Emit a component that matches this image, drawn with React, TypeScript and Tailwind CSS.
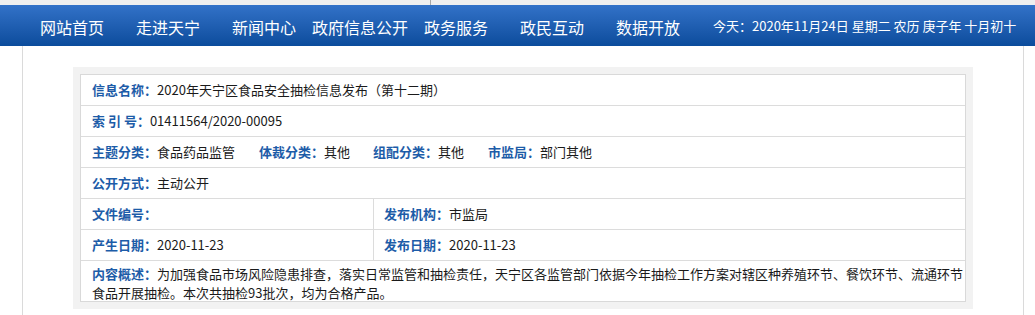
const navItems = ['网站首页', '走进天宁', '新闻中心', '政府信息公开', '政务服务', '政民互动', '数据开放'];

function Label({ children }: { children: React.ReactNode }) {
  return <span className="font-bold text-[#1d5ca8]">{children}</span>;
}

export default function App() {
  return (
    <div className="w-[1035px] h-[315px] bg-white overflow-hidden text-[13px] text-[#1a1a1a]" style={{ fontFamily: '"Noto Sans CJK SC", "Noto Sans", sans-serif' }}>
      {/* top strip */}
      <div className="h-[5px] bg-[#efefef] flex">
        <div className="w-[430px]" />
        <div className="w-px bg-[#a8a8a8]" />
      </div>

      {/* nav */}
      <div className="h-[41px] bg-gradient-to-b from-[#3272c8] to-[#0b4c9c] flex items-center pl-[24px] text-white">
        {navItems.map((item) => (
          <a key={item} className="w-[96px] text-center text-[16px] pt-[3px] whitespace-nowrap">{item}</a>
        ))}
        <div className="ml-[17px] text-[13px] pt-[1px] whitespace-nowrap">今天：2020年11月24日 星期二 农历 庚子年 十月初十</div>
      </div>

      {/* body */}
      <div className="ml-[22px] w-[1002px] h-[269px] border-x border-[#dadada] pt-[21px]">
        <div className="ml-[50px] w-[900px] bg-[#f2f2f2] p-[7px]">
          <div className="border border-[#d9d9d9] bg-white">
            <div className="h-[31px] border-b border-[#dcdcdc] flex items-center pl-[11px]">
              <Label>信息名称：</Label>
              <span>2020年天宁区食品安全抽检信息发布（第十二期）</span>
            </div>
            <div className="h-[31px] border-b border-[#dcdcdc] flex items-center pl-[11px]">
              <Label>索 引 号：</Label>
              <span>01411564/2020-00095</span>
            </div>
            <div className="h-[31px] border-b border-[#dcdcdc] flex items-center pl-[11px]">
              <span className="w-[167px] whitespace-nowrap"><Label>主题分类：</Label>食品药品监管</span>
              <span className="w-[114px] whitespace-nowrap"><Label>体裁分类：</Label>其他</span>
              <span className="w-[115px] whitespace-nowrap"><Label>组配分类：</Label>其他</span>
              <span className="whitespace-nowrap"><Label>市监局：</Label>部门其他</span>
            </div>
            <div className="h-[31px] border-b border-[#dcdcdc] flex items-center pl-[11px]">
              <Label>公开方式：</Label>
              <span>主动公开</span>
            </div>
            <div className="h-[31px] border-b border-[#dcdcdc] flex">
              <div className="w-[293px] border-r border-[#dcdcdc] flex items-center pl-[11px]">
                <Label>文件编号：</Label>
              </div>
              <div className="flex items-center pl-[10px]">
                <Label>发布机构：</Label>
                <span>市监局</span>
              </div>
            </div>
            <div className="h-[31px] border-b border-[#dcdcdc] flex">
              <div className="w-[293px] border-r border-[#dcdcdc] flex items-center pl-[11px]">
                <Label>产生日期：</Label>
                <span>2020-11-23</span>
              </div>
              <div className="flex items-center pl-[10px]">
                <Label>发布日期：</Label>
                <span>2020-11-23</span>
              </div>
            </div>
            <div className="h-[40px] pl-[11px] pt-[3px] leading-[19px]">
              <p className="whitespace-nowrap">
                <Label>内容概述：</Label>
                为加强食品市场风险隐患排查，落实日常监管和抽检责任，天宁区各监管部门依据今年抽检工作方案对辖区种养殖环节、餐饮环节、流通环节
              </p>
              <p className="whitespace-nowrap">食品开展抽检。本次共抽检93批次，均为合格产品。</p>
            </div>
          </div>
        </div>
      </div>
    </div>
  );
}
